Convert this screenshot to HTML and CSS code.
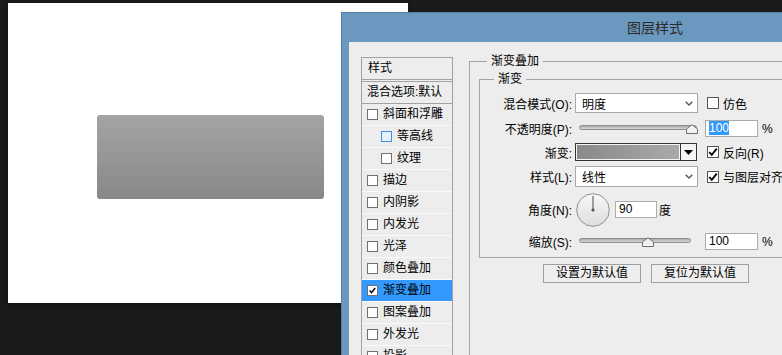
FILE: index.html
```html
<!DOCTYPE html>
<html lang="zh-CN">
<head>
<meta charset="utf-8">
<title>图层样式</title>
<link rel="stylesheet" href="styles.css">
</head>
<body>
<div class="doc">
  <div class="shape"></div>
</div>

<div class="dialog">
  <div class="titlebar">图层样式</div>
  <div class="client">
    <div class="fx-list">
      <div class="fx-head">样式</div>
      <div class="fx-blend">混合选项:默认</div>
      <div class="fx-row"><span class="cb"></span>斜面和浮雕</div>
      <div class="fx-row sub"><span class="cb focus"></span>等高线</div>
      <div class="fx-row sub"><span class="cb"></span>纹理</div>
      <div class="fx-row"><span class="cb"></span>描边</div>
      <div class="fx-row"><span class="cb"></span>内阴影</div>
      <div class="fx-row"><span class="cb"></span>内发光</div>
      <div class="fx-row"><span class="cb"></span>光泽</div>
      <div class="fx-row"><span class="cb"></span>颜色叠加</div>
      <div class="fx-row active"><span class="cb"><svg viewBox="0 0 11 11" width="11" height="11"><path d="M2 5.5 L4.3 8 L8.8 2.5" fill="none" stroke="#000" stroke-width="1.8"/></svg></span>渐变叠加</div>
      <div class="fx-row"><span class="cb"></span>图案叠加</div>
      <div class="fx-row"><span class="cb"></span>外发光</div>
      <div class="fx-row"><span class="cb"></span>投影</div>
    </div>

    <div class="panel">
      <div class="group outer">
        <div class="legend">渐变叠加</div>
        <div class="group inner">
          <div class="legend">渐变</div>
          <div class="rows">
            <div class="row r1">
              <span class="lbl">混合模式(O):</span>
              <div class="select">明度<svg class="chev" viewBox="0 0 8 5" width="8" height="5"><path d="M0.7 0.7 L4 4 L7.3 0.7" fill="none" stroke="#555" stroke-width="1.4"/></svg></div>
              <span class="ck"></span><span class="ck-text">仿色</span>
            </div>
            <div class="row r2">
              <span class="lbl">不透明度(P):</span>
              <div class="slider s-opacity">
                <div class="track"></div>
                <svg class="thumb" style="left:107px" viewBox="0 0 12 10" width="12" height="10"><path d="M0.5 9.5 V5 L6 0.7 L11.5 5 V9.5 Z" fill="#f2f2f2" stroke="#6f6f6f"/></svg>
              </div>
              <div class="field w53"><span class="sel-text">100</span></div>
              <span class="unit">%</span>
            </div>
            <div class="row r3">
              <span class="lbl">渐变:</span>
              <div class="grad">
                <div class="grad-fill"></div>
                <div class="grad-arrow"><svg viewBox="0 0 9 5" width="9" height="5"><path d="M0 0 H9 L4.5 5 Z" fill="#000"/></svg></div>
              </div>
              <span class="ck"><svg viewBox="0 0 12 12" width="10" height="10"><path d="M1.5 6 L4.5 9.3 L10.5 2" fill="none" stroke="#000" stroke-width="2.2"/></svg></span><span class="ck-text">反向(R)</span>
            </div>
            <div class="row r4">
              <span class="lbl">样式(L):</span>
              <div class="select tall">线性<svg class="chev" viewBox="0 0 8 5" width="8" height="5"><path d="M0.7 0.7 L4 4 L7.3 0.7" fill="none" stroke="#555" stroke-width="1.4"/></svg></div>
              <span class="ck"><svg viewBox="0 0 12 12" width="10" height="10"><path d="M1.5 6 L4.5 9.3 L10.5 2" fill="none" stroke="#000" stroke-width="2.2"/></svg></span><span class="ck-text">与图层对齐</span>
            </div>
            <div class="row r5">
              <span class="lbl">角度(N):</span>
              <div class="dial">
                <svg viewBox="0 0 34 34" width="34" height="34">
                  <defs>
                    <linearGradient id="dg" x1="0" y1="0" x2="0" y2="1">
                      <stop offset="0" stop-color="#f7f7f7"/>
                      <stop offset="1" stop-color="#dedede"/>
                    </linearGradient>
                  </defs>
                  <circle cx="17" cy="17" r="16.3" fill="url(#dg)" stroke="#8f8f8f"/>
                  <line x1="17" y1="3" x2="17" y2="16" stroke="#666" stroke-width="1.2"/>
                  <circle cx="17" cy="17" r="1.6" fill="#555"/>
                </svg>
              </div>
              <div class="field w42">90</div>
              <span class="deg">度</span>
            </div>
            <div class="row r6">
              <span class="lbl">缩放(S):</span>
              <div class="slider s-scale">
                <div class="track"></div>
                <svg class="thumb" style="left:63px" viewBox="0 0 12 10" width="12" height="10"><path d="M0.5 9.5 V5 L6 0.7 L11.5 5 V9.5 Z" fill="#f2f2f2" stroke="#6f6f6f"/></svg>
              </div>
              <div class="field w53">100</div>
              <span class="unit">%</span>
            </div>
          </div>
        </div>
        <div class="buttons">
          <button class="btn">设置为默认值</button>
          <button class="btn">复位为默认值</button>
        </div>
      </div>
    </div>
  </div>
</div>
</body>
</html>
```

FILE: styles.css
```css
html, body {
  margin: 0;
  padding: 0;
}

body {
  width: 782px;
  height: 355px;
  overflow: hidden;
  background: #1a1a1a;
  font-family: "Liberation Sans", "Noto Sans CJK SC", sans-serif;
  font-size: 12px;
  color: #000;
  position: relative;
}

/* document canvas */
.doc {
  margin: 3px 0 0 8px;
  width: 400px;
  height: 300px;
  box-sizing: border-box;
  padding: 112px 0 0 89px;
  background: #fff;
  box-shadow: 0 2px 4px rgba(0, 0, 0, 0.45);
}

.shape {
  width: 227px;
  height: 84px;
  border-radius: 3px;
  background: linear-gradient(#a4a4a4, #888888);
}

/* dialog window */
.dialog {
  position: absolute;
  left: 341px;
  top: 12px;
  width: 628px;
  height: 420px;
  box-sizing: border-box;
  background: #6b98be;
  border: 1px solid #557fa4;
  padding: 0 7px 7px 7px;
  display: flex;
  flex-direction: column;
}

.titlebar {
  height: 29px;
  line-height: 29px;
  text-align: center;
  font-family: "Noto Sans CJK SC", sans-serif;
  font-size: 14px;
  color: #2b2b2b;
  flex-shrink: 0;
}

.client {
  flex: 1;
  background: #ededed;
  display: flex;
  align-items: flex-start;
  padding-left: 12px;
}

/* effects list */
.fx-list {
  margin-top: 15px;
  width: 92px;
  box-sizing: border-box;
  border: 1px solid #a2a2a2;
  flex-shrink: 0;
  line-height: 21px;
  white-space: nowrap;
}

.fx-head {
  height: 21px;
  padding-left: 6px;
  border-bottom: 3px double #a2a2a2;
}

.fx-blend {
  height: 21px;
  padding-left: 5px;
  border-bottom: 1px solid #a2a2a2;
}

.fx-row {
  height: 21px;
  border-bottom: 1px solid #fafafa;
  display: flex;
  align-items: center;
  padding-left: 5px;
}

.fx-row.sub {
  padding-left: 19px;
}

.fx-row.active {
  background: #3399ff;
}

.cb {
  width: 11px;
  height: 11px;
  box-sizing: border-box;
  border: 1px solid #707070;
  background: #fff;
  margin-right: 5px;
  flex-shrink: 0;
  display: flex;
  align-items: center;
  justify-content: center;
}

.cb svg {
  display: block;
}

.cb.focus {
  border-color: #3c8ee6;
  background: #e8f2fd;
}

/* right panel */
.panel {
  margin-left: 16px;
  margin-top: 19px;
  flex: 1;
}

.group {
  border: 1px solid #a3a3a3;
}

.group.outer {
  border-right: none;
  border-bottom: none;
  height: 400px;
}

.legend {
  width: max-content;
  padding: 0 4px;
  line-height: 15px;
  height: 15px;
  background: #ededed;
  margin: -8px 0 0 17px;
}

.group.inner {
  margin: 10px 0 0 9px;
  border-right: none;
}

.group.inner > .legend {
  margin-left: 14px;
}

.rows {
  padding: 5px 0 1px 0;
}

.row {
  display: flex;
  align-items: center;
  white-space: nowrap;
}

.r1 { height: 22px; }
.r2 { height: 29px; }
.r3 { height: 18px; }
.r4 { height: 31px; }
.r5 { height: 35px; }
.r6 { height: 29px; }

.lbl {
  width: 92px;
  text-align: right;
  margin-right: 3px;
  flex-shrink: 0;
}

.select {
  width: 123px;
  height: 20px;
  box-sizing: border-box;
  border: 1px solid #a9a9a9;
  background: #fff;
  padding-left: 6px;
  display: flex;
  align-items: center;
  justify-content: space-between;
  padding-right: 4px;
  margin-right: 9px;
  flex-shrink: 0;
}

.select.tall {
  height: 21px;
}

.chev {
  display: block;
}

.ck {
  width: 12px;
  height: 12px;
  box-sizing: border-box;
  border: 1px solid #555;
  background: #fff;
  flex-shrink: 0;
  display: flex;
  align-items: center;
  justify-content: center;
}

.ck svg {
  display: block;
}

.ck-text {
  margin-left: 4px;
}

.slider {
  position: relative;
  height: 11px;
  margin-left: 4px;
  flex-shrink: 0;
}

.s-opacity {
  width: 118px;
  margin-right: 8px;
}

.s-scale {
  width: 112px;
  margin-right: 14px;
}

.track {
  margin-top: 2px;
  height: 5px;
  box-sizing: border-box;
  border-radius: 3px;
  border: 1px solid #8c8c8c;
  background: linear-gradient(#a9a9a9, #d8d8d8);
}

.thumb {
  position: absolute;
  top: 1px;
  display: block;
}

.field {
  height: 17px;
  box-sizing: border-box;
  border: 1px solid #ababab;
  background: #fff;
  padding-left: 3px;
  line-height: 15px;
  flex-shrink: 0;
}

.w53 { width: 53px; }
.w42 { width: 42px; }

.sel-text {
  background: #3399ff;
  color: #fff;
}

.unit {
  margin-left: 4px;
}

.grad {
  width: 122px;
  height: 18px;
  box-sizing: border-box;
  border: 1px solid #333;
  background: #f4f4f4;
  display: flex;
  margin-right: 10px;
  flex-shrink: 0;
}

.grad-fill {
  flex: 1;
  margin: 1px;
  background: linear-gradient(to right, #8a8a8a, #a9a9a9);
}

.grad-arrow {
  width: 15px;
  border-left: 1px solid #333;
  display: flex;
  align-items: center;
  justify-content: center;
}

.grad-arrow svg {
  display: block;
}

.dial {
  margin-left: 1px;
  margin-right: 5px;
  flex-shrink: 0;
}

.dial svg {
  display: block;
}

.deg {
  margin-left: 2px;
}

.buttons {
  margin: 6px 0 0 73px;
  display: flex;
  gap: 10px;
}

.btn {
  width: 98px;
  height: 19px;
  padding: 0;
  border: 1px solid #a0a0a0;
  background: #eeeeee;
  font-family: "Liberation Sans", "Noto Sans CJK SC", sans-serif;
  font-size: 12px;
  color: #000;
  line-height: 17px;
}
```
